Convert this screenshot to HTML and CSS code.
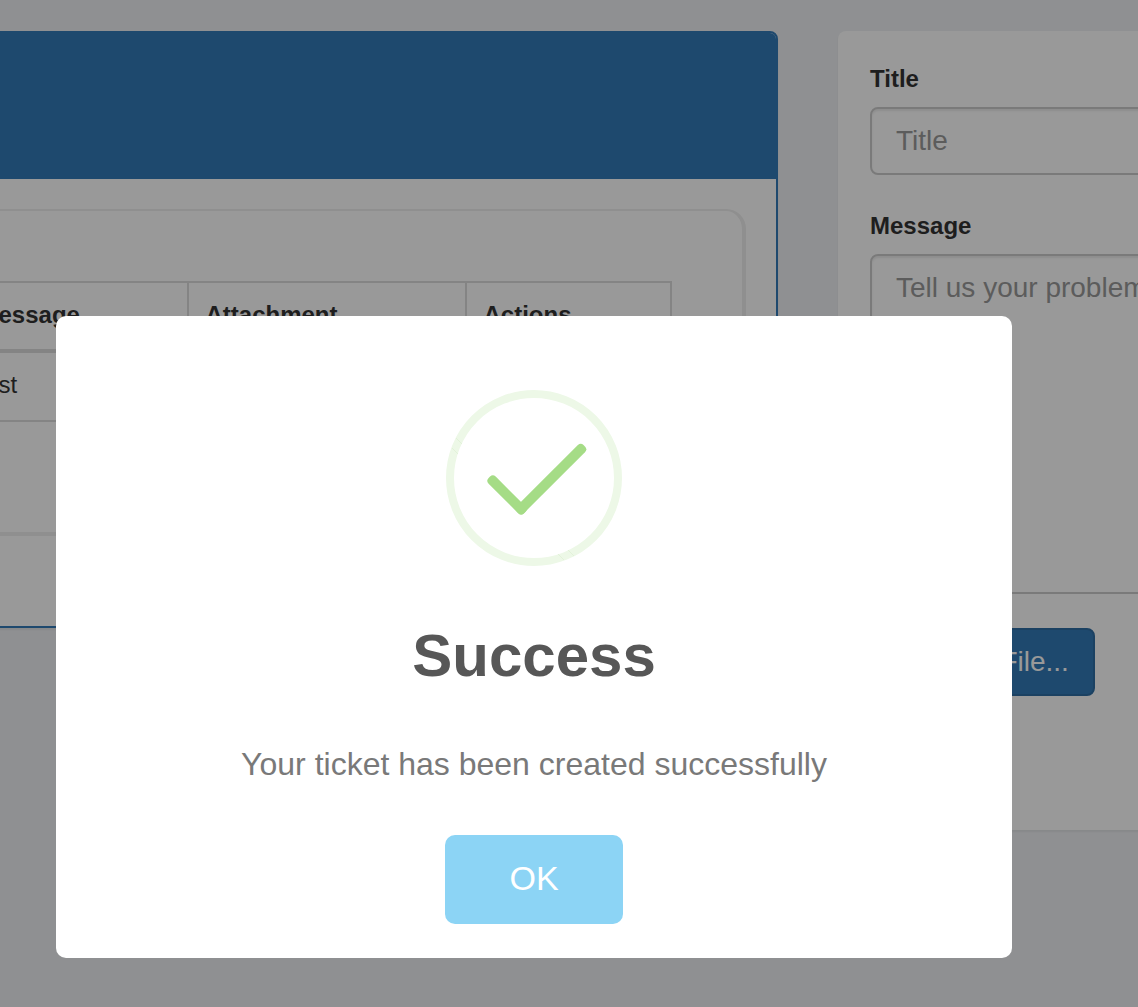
FILE: index.html
```html
<!DOCTYPE html>
<html lang="en">
<head>
<meta charset="utf-8">
<title>Support tickets</title>
<link rel="stylesheet" href="styles.css">
</head>
<body>
<main class="page">
  <section class="panel">
    <header class="panel-heading"></header>
    <div class="ticket-box">
      <table class="tickets">
        <colgroup><col class="col-message"><col class="col-attachment"><col class="col-actions"></colgroup>
        <thead><tr><th>Message</th><th>Attachment</th><th>Actions</th></tr></thead>
        <tbody><tr><td>test</td><td></td><td></td></tr></tbody>
      </table>
    </div>
  </section>
  <form class="card">
    <label class="label" for="title">Title</label>
    <input class="control" id="title" type="text" placeholder="Title">
    <label class="label" for="message">Message</label>
    <textarea class="control control-area" id="message" placeholder="Tell us your problem"></textarea>
    <button class="file-button" type="button">Choose File...</button>
  </form>
</main>
<div class="overlay">
  <div class="modal" role="dialog">
    <svg class="success-icon" viewBox="0 0 176 176" width="176" height="176">
      <circle cx="88" cy="88" r="84" fill="none" stroke="#edf8e7" stroke-width="8"/>
      <path d="M10 48l6 6M6 58l6 6M112 164l6 6M122 160l6 6" fill="none" stroke="#dcefd3" stroke-width=".7"/>
      <rect x="36" y="100" width="50" height="10" rx="4" fill="#a5dc86" transform="rotate(45 61 105)"/>
      <rect x="58" y="84" width="94" height="10" rx="4" fill="#a5dc86" transform="rotate(-45 105 89)"/>
    </svg>
    <h2 class="modal-title">Success</h2>
    <p class="modal-text">Your ticket has been created successfully</p>
    <button class="ok-button" type="button">OK</button>
  </div>
</div>
</body>
</html>
```
FILE: styles.css
```css
* { box-sizing: border-box; }

body {
  margin: 0;
  height: 1007px;
  overflow: hidden;
  background: #eef0f3;
  color: #333;
  font-family: "Liberation Sans", Arial, sans-serif;
  font-size: 24px;
}

.page {
  display: flex;
  align-items: flex-start;
  gap: 60px;
  padding-top: 31px;
  margin-left: -80px;
}

.panel {
  flex: none;
  width: 858px;
  height: 597px;
  background: #fff;
  border: 2px solid #337ab7;
  border-radius: 8px;
  box-shadow: 0 2px 2px rgba(0, 0, 0, .05);
}

.panel-heading {
  height: 146px;
  background: #337ab7;
  border-radius: 6px 6px 0 0;
}

.ticket-box {
  height: 327px;
  margin: 30px 30px 0 18px;
  padding: 70px 0 0 18px;
  border: solid #eee;
  border-width: 2px 4px 4px 2px;
  border-radius: 20px;
}

.tickets {
  width: 712px;
  table-layout: fixed;
  border-collapse: separate;
  border-spacing: 0;
  border-top: 2px solid #ddd;
  border-left: 2px solid #ddd;
}

.col-message { width: 227px; }
.col-attachment { width: 278px; }
.col-actions { width: 205px; }

.tickets th,
.tickets td {
  padding: 0 16px 0 16.5px;
  border-right: 2px solid #ddd;
  border-bottom: 2px solid #ddd;
  line-height: 34px;
  text-align: left;
}

.tickets th {
  height: 70px;
  padding-bottom: 2px;
  border-bottom-width: 4px;
}

.tickets td {
  height: 69px;
  padding-bottom: 4px;
}

.card {
  flex: none;
  width: 560px;
  height: 799px;
  padding: 31px 32px;
  display: flex;
  flex-direction: column;
  align-items: flex-start;
  background: #fff;
  border-radius: 8px;
  box-shadow: 0 2px 2px rgba(0, 0, 0, .05);
}

.label {
  height: 45px;
  line-height: 34px;
  font-weight: bold;
}

.control {
  width: 100%;
  height: 68px;
  flex: none;
  margin: 0 0 34px;
  padding: 12px 24px;
  border: 2px solid #ccc;
  border-radius: 8px;
  background: #fff;
  box-shadow: inset 0 2px 2px rgba(0, 0, 0, .075);
  font: 28px/40px "Liberation Sans", Arial, sans-serif;
  resize: none;
}

.control::placeholder { color: #999; opacity: 1; }

.control-area { height: 340px; }

.file-button {
  width: 225px;
  height: 68px;
  padding: 0;
  border: 2px solid #2e6da4;
  border-radius: 8px;
  background: #337ab7;
  color: #fff;
  font: 28px/40px "Liberation Sans", Arial, sans-serif;
}

.overlay {
  position: fixed;
  inset: 0;
  padding: 316px 0 0 56px;
  background: rgba(0, 0, 0, .4);
}

.modal {
  width: 956px;
  height: 642px;
  padding-top: 74px;
  display: flex;
  flex-direction: column;
  align-items: center;
  background: #fff;
  border-radius: 10px;
}

.success-icon { flex: none; }

.modal-title {
  margin: 50px 0 0;
  color: #575757;
  font-size: 60px;
  line-height: 80px;
}

.modal-text {
  margin: 48px 0 0;
  color: #797979;
  font-size: 32px;
  line-height: 40px;
}

.ok-button {
  width: 178px;
  height: 89px;
  margin-top: 51px;
  padding: 0 0 3px;
  border: 0;
  border-radius: 10px;
  background: #8cd4f5;
  color: #fff;
  font: 34px/40px "Liberation Sans", Arial, sans-serif;
}
```
